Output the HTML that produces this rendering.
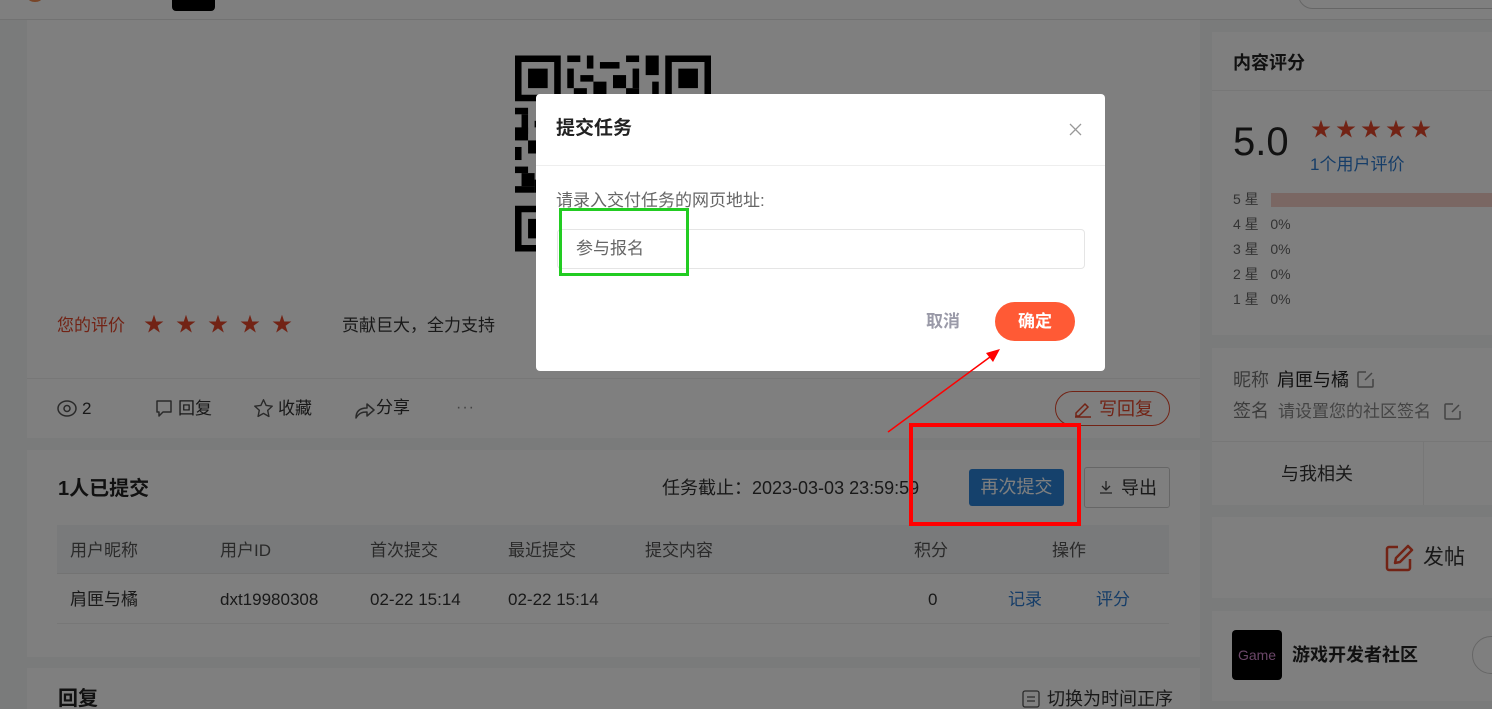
<!DOCTYPE html>
<html style="width:1492px;height:709px;overflow:hidden"><head><meta charset="utf-8">
<style>
*{margin:0;padding:0;box-sizing:border-box}
body{width:1492px;height:709px;overflow:hidden;position:relative;background:#f5f6f7;font-family:"Liberation Sans","Noto Sans CJK SC",sans-serif;color:#333;font-size:17px}
.abs{position:absolute}
.card{position:absolute;background:#fff}
.t{position:absolute;white-space:nowrap;line-height:1}
.star{color:#e4472b}
.blue{color:#2c7bd0}
</style></head><body>
<div class="abs" style="left:0;top:0;width:1492px;height:20px;background:#fff;border-bottom:1px solid #e4e4e4"></div>
<div class="abs" style="left:28px;top:-6px;width:14px;height:8px;border-radius:50%;background:#f08a50"></div>
<div class="abs" style="left:172px;top:-4px;width:43px;height:15px;border-radius:4px;background:#000"></div>
<div class="abs" style="left:1298px;top:-20px;width:220px;height:29px;border-radius:15px;border:1px solid #ccc"></div>

<div class="card" style="left:27px;top:20px;width:1173px;height:418px"></div>
<svg class="abs" style="left:515px;top:55px" width="196" height="197" viewBox="0 0 30 30">
<g fill="#000">
<path d="M0 0h7v7H0zM1 1v5h5V1zM2 2h3v3H2z" fill-rule="evenodd"/>
<path d="M23 0h7v7h-7zM24 1v5h5V1zM25 2h3v3h-3z" fill-rule="evenodd"/>
<path d="M0 23h7v7H0zM1 24v5h5v-5zM2 25h3v3H2z" fill-rule="evenodd"/>
<rect x="8" y="0" width="2" height="1"/><rect x="11" y="0" width="1" height="2"/><rect x="13" y="1" width="3" height="1"/><rect x="17" y="0" width="2" height="1"/><rect x="20" y="0" width="2" height="3"/>
<rect x="8" y="2" width="1" height="3"/><rect x="10" y="3" width="2" height="1"/><rect x="12" y="4" width="2" height="2"/><rect x="15" y="3" width="2" height="2"/><rect x="18" y="2" width="1" height="3"/><rect x="9" y="5" width="2" height="1"/><rect x="17" y="5" width="2" height="1"/><rect x="21" y="4" width="1" height="3"/>
<rect x="0" y="8" width="2" height="1"/><rect x="1" y="9" width="1" height="3"/><rect x="0" y="11" width="2" height="2"/><rect x="3" y="10" width="2" height="1"/><rect x="0" y="14" width="1" height="2"/><rect x="2" y="13" width="2" height="2"/><rect x="0" y="17" width="2" height="1"/><rect x="1" y="18" width="2" height="2"/><rect x="0" y="20" width="3" height="1"/><rect x="4" y="16" width="2" height="2"/><rect x="3" y="19" width="1" height="2"/>
<rect x="8" y="8" width="14" height="14" opacity="0.9"/>
</g></svg>
<div class="t" style="left:57px;top:317px;color:#e4472b">您的评价</div>
<div class="t star" style="left:144px;top:315px;font-size:20px;letter-spacing:12px">★★★★★</div>
<div class="t" style="left:342px;top:317px">贡献巨大，全力支持</div>
<div class="abs" style="left:27px;top:378px;width:1173px;height:1px;background:#eee"></div>
<svg class="abs" style="left:57px;top:400px" width="20" height="17" viewBox="0 0 20 17"><ellipse cx="10" cy="8.5" rx="9" ry="7.5" fill="none" stroke="#555" stroke-width="1.5"/><circle cx="10" cy="8.5" r="3" fill="none" stroke="#555" stroke-width="1.5"/></svg>
<div class="t" style="left:82px;top:400px">2</div>
<svg class="abs" style="left:154px;top:399px" width="20" height="20" viewBox="0 0 20 20"><path d="M3 2h14v11H9l-4 4v-4H3z" fill="none" stroke="#555" stroke-width="1.5" stroke-linejoin="round"/></svg>
<div class="t" style="left:178px;top:400px">回复</div>
<svg class="abs" style="left:253px;top:398px" width="21" height="21" viewBox="0 0 24 24"><path d="M12 2l3 6.5 7 .8-5.2 4.8 1.4 7L12 17.6 5.8 21l1.4-7L2 9.3l7-.8z" fill="none" stroke="#555" stroke-width="1.6" stroke-linejoin="round"/></svg>
<div class="t" style="left:278px;top:400px">收藏</div>
<svg class="abs" style="left:354px;top:399px" width="22" height="20" viewBox="0 0 22 20"><path d="M2 19c0-7 4-10 11-10V5l7 6-7 6v-4c-5 0-8 1-11 6z" fill="none" stroke="#555" stroke-width="1.5" stroke-linejoin="round"/></svg>
<div class="t" style="left:376px;top:399px">分享</div>
<div class="t" style="left:456px;top:400px;color:#888;font-size:16px;letter-spacing:1px">···</div>
<div class="abs" style="left:1055px;top:391px;width:115px;height:35px;border:1px solid #e4472b;border-radius:18px"></div>
<svg class="abs" style="left:1073px;top:399px" width="20" height="20" viewBox="0 0 20 20"><path d="M3 14l9-9 3 3-9 9H3zM2 18h16" fill="none" stroke="#e4472b" stroke-width="1.5"/></svg>
<div class="t" style="left:1099px;top:400px;color:#e4472b;font-size:18px">写回复</div>

<div class="card" style="left:27px;top:450px;width:1173px;height:207px"></div>
<div class="t" style="left:58px;top:479px;font-size:20px;font-weight:bold;color:#222">1人已提交</div>
<div class="t" style="left:662px;top:479px;font-size:18px">任务截止：2023-03-03 23:59:59</div>
<div class="abs" style="left:969px;top:469px;width:95px;height:37px;background:#2b83d8;border-radius:3px;color:#fff;font-size:18px;line-height:37px;text-align:center">再次提交</div>
<div class="abs" style="left:1084px;top:467px;width:86px;height:41px;border:1px solid #ccc;border-radius:3px"></div>
<svg class="abs" style="left:1099px;top:480px" width="14" height="14" viewBox="0 0 14 14"><path d="M7 1v9M3 6l4 4 4-4M1 13h12" fill="none" stroke="#444" stroke-width="1.3"/></svg>
<div class="t" style="left:1121px;top:479px;font-size:18px">导出</div>
<div class="abs" style="left:57px;top:525px;width:1112px;height:49px;background:#f3f4f6;border-bottom:1px solid #e6e6e6"></div>
<div class="t" style="left:70px;top:542px;color:#555">用户昵称</div>
<div class="t" style="left:220px;top:542px;color:#555">用户ID</div>
<div class="t" style="left:370px;top:542px;color:#555">首次提交</div>
<div class="t" style="left:508px;top:542px;color:#555">最近提交</div>
<div class="t" style="left:645px;top:542px;color:#555">提交内容</div>
<div class="t" style="left:914px;top:542px;color:#555">积分</div>
<div class="t" style="left:1052px;top:542px;color:#555">操作</div>
<div class="abs" style="left:57px;top:623px;width:1112px;height:1px;background:#eee"></div>
<div class="t" style="left:70px;top:591px">肩匣与橘</div>
<div class="t" style="left:220px;top:591px">dxt19980308</div>
<div class="t" style="left:370px;top:591px">02-22 15:14</div>
<div class="t" style="left:508px;top:591px">02-22 15:14</div>
<div class="t" style="left:928px;top:591px">0</div>
<div class="t blue" style="left:1008px;top:591px">记录</div>
<div class="t blue" style="left:1096px;top:591px">评分</div>

<div class="card" style="left:27px;top:668px;width:1173px;height:41px"></div>
<div class="t" style="left:58px;top:689px;font-size:20px;font-weight:bold;color:#222">回复</div>
<svg class="abs" style="left:1022px;top:690px" width="18" height="18" viewBox="0 0 18 18"><rect x="1" y="1" width="16" height="16" rx="2" fill="none" stroke="#555" stroke-width="1.3"/><path d="M5 7h8M5 11h8" stroke="#555" stroke-width="1.3"/></svg>
<div class="t" style="left:1047px;top:690px;font-size:18px">切换为时间正序</div>

<div class="card" style="left:1212px;top:32px;width:290px;height:303px"></div>
<div class="t" style="left:1233px;top:54px;font-size:18px;font-weight:bold;color:#222">内容评分</div>
<div class="abs" style="left:1212px;top:90px;width:290px;height:1px;background:#eee"></div>
<div class="t" style="left:1233px;top:122px;font-size:40px;color:#222">5.0</div>
<div class="t star" style="left:1311px;top:120px;font-size:20px;letter-spacing:5px">★★★★★</div>
<div class="t blue" style="left:1310px;top:156px;font-size:17px">1个用户评价</div>
<div class="t" style="left:1233px;top:192px;font-size:14px;color:#666">5 星</div>
<div class="abs" style="left:1271px;top:193px;width:230px;height:14px;background:#f5cfc7"></div>
<div class="t" style="left:1233px;top:217px;font-size:14px;color:#666">4 星&nbsp;&nbsp;&nbsp;0%</div>
<div class="t" style="left:1233px;top:242px;font-size:14px;color:#666">3 星&nbsp;&nbsp;&nbsp;0%</div>
<div class="t" style="left:1233px;top:267px;font-size:14px;color:#666">2 星&nbsp;&nbsp;&nbsp;0%</div>
<div class="t" style="left:1233px;top:292px;font-size:14px;color:#666">1 星&nbsp;&nbsp;&nbsp;0%</div>

<div class="card" style="left:1212px;top:348px;width:290px;height:157px"></div>
<div class="t" style="left:1233px;top:371px;font-size:18px;color:#777">昵称</div>
<div class="t" style="left:1277px;top:371px;font-size:18px;color:#222">肩匣与橘</div>
<svg class="abs" style="left:1356px;top:370px" width="19" height="19" viewBox="0 0 19 19"><path d="M10 2H3a1 1 0 0 0-1 1v13a1 1 0 0 0 1 1h13a1 1 0 0 0 1-1V9M9 10l7-7" fill="none" stroke="#888" stroke-width="1.5"/></svg>
<div class="t" style="left:1233px;top:402px;font-size:18px;color:#777">签名</div>
<div class="t" style="left:1278px;top:403px;font-size:17px;color:#888">请设置您的社区签名</div>
<svg class="abs" style="left:1443px;top:402px" width="19" height="19" viewBox="0 0 19 19"><path d="M10 2H3a1 1 0 0 0-1 1v13a1 1 0 0 0 1 1h13a1 1 0 0 0 1-1V9M9 10l7-7" fill="none" stroke="#888" stroke-width="1.5"/></svg>
<div class="abs" style="left:1212px;top:441px;width:290px;height:1px;background:#eee"></div>
<div class="abs" style="left:1423px;top:441px;width:1px;height:64px;background:#eee"></div>
<div class="t" style="left:1281px;top:465px;font-size:18px">与我相关</div>

<div class="card" style="left:1212px;top:517px;width:290px;height:81px"></div>
<svg class="abs" style="left:1384px;top:543px" width="30" height="30" viewBox="0 0 30 30"><path d="M14 4H5a2 2 0 0 0-2 2v19a2 2 0 0 0 2 2h19a2 2 0 0 0 2-2v-9" fill="none" stroke="#e4472b" stroke-width="2.5"/><path d="M24 3l4 4-12 12-5 1 1-5z" fill="none" stroke="#e4472b" stroke-width="2.5" stroke-linejoin="round"/></svg>
<div class="t" style="left:1423px;top:547px;font-size:21px">发帖</div>

<div class="card" style="left:1212px;top:611px;width:290px;height:90px"></div>
<div class="abs" style="left:1232px;top:630px;width:50px;height:50px;border-radius:4px;background:#000;color:#d58ccf;font-size:14px;line-height:50px;text-align:center">Game</div>
<div class="t" style="left:1292px;top:646px;font-size:18px;font-weight:bold;color:#222">游戏开发者社区</div>
<div class="abs" style="left:1472px;top:636px;width:40px;height:38px;border:1px solid #ccc;border-radius:19px"></div>

<div class="abs" style="left:0;top:0;width:1492px;height:709px;background:rgba(0,0,0,0.5)"></div>

<div class="abs" style="left:536px;top:94px;width:569px;height:277px;background:#fff;border-radius:4px"></div>
<div class="t" style="left:556px;top:119px;font-size:19px;font-weight:bold;color:#222">提交任务</div>
<svg class="abs" style="left:1069px;top:123px" width="13" height="13" viewBox="0 0 13 13"><path d="M1 1l11 11M12 1L1 12" stroke="#999" stroke-width="1.3"/></svg>
<div class="abs" style="left:536px;top:165px;width:569px;height:1px;background:#eee"></div>
<div class="t" style="left:556px;top:192px;font-size:17px;color:#666">请录入交付任务的网页地址:</div>
<div class="abs" style="left:557px;top:229px;width:528px;height:40px;border:1px solid #e5e5e5;border-radius:4px"></div>
<div class="t" style="left:576px;top:240px;font-size:17px;color:#666">参与报名</div>
<div class="t" style="left:926px;top:313px;font-size:17px;font-weight:bold;color:#9a9aa8">取消</div>
<div class="abs" style="left:995px;top:302px;width:80px;height:39px;border-radius:20px;background:#ff5a35;color:#fff;font-weight:bold;font-size:17px;line-height:39px;text-align:center">确定</div>

<div class="abs" style="left:559px;top:208px;width:130px;height:68px;border:3px solid #22cc22"></div>
<div class="abs" style="left:909px;top:423px;width:172px;height:103px;border:4px solid #ff0000"></div>
<svg class="abs" style="left:0;top:0" width="1492" height="709"><line x1="888" y1="432" x2="990" y2="357" stroke="#ff0000" stroke-width="1.5"/><path d="M1000 349l-14 4 7 9z" fill="#ff0000"/></svg>
</body></html>
